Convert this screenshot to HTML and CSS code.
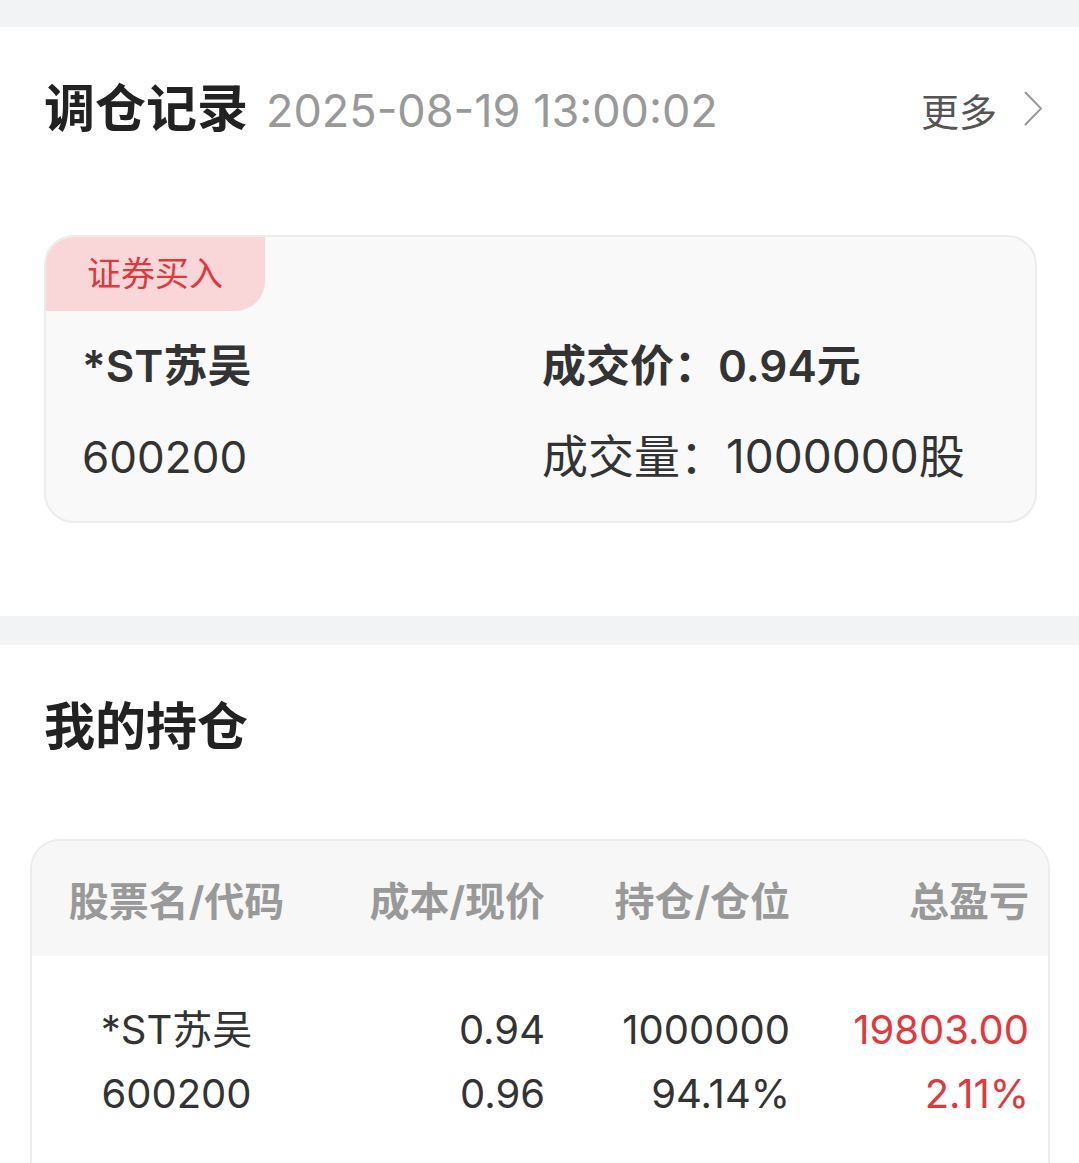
FILE: index.html
```html
<!doctype html>
<html>
  <head>
    <title>调仓记录</title>
    <meta name="viewport" content="width=device-width, initial-scale=1.0" />
    <meta charset="utf-8" />
    <link rel="stylesheet" href="styles.css">
  </head>
  <body>
    <section class="panel record">
      <div class="panel-head">
        <h2 class="title">调仓记录</h2>
        <span class="stamp">2025-08-19 13:00:02</span>
        <a class="more">
          <span>更多</span>
          <svg width="20" height="36" viewBox="0 0 20 36">
            <path d="M2 1 L18 17.5 L2 34" fill="none" stroke="#9a9a9a" stroke-width="2" />
          </svg>
        </a>
      </div>
      <div class="trade-card">
        <div class="tag">证券买入</div>
        <div class="trade-body">
          <div class="cell strong">*ST苏吴</div>
          <div class="cell strong">成交价：0.94元</div>
          <div class="cell"><span class="num">600200</span></div>
          <div class="cell">成交量：1000000股</div>
        </div>
      </div>
    </section>

    <section class="panel holdings">
      <div class="panel-head">
        <h2 class="title">我的持仓</h2>
      </div>
      <div class="table">
        <div class="thead">
          <div class="col first">股票名/代码</div>
          <div class="col">成本/现价</div>
          <div class="col">持仓/仓位</div>
          <div class="col">总盈亏</div>
        </div>
        <div class="trow">
          <div class="col first">
            <div>*ST苏吴</div>
            <div>600200</div>
          </div>
          <div class="col">
            <div>0.94</div>
            <div>0.96</div>
          </div>
          <div class="col">
            <div>1000000</div>
            <div>94.14%</div>
          </div>
          <div class="col up">
            <div>19803.00</div>
            <div>2.11%</div>
          </div>
        </div>
      </div>
    </section>
  </body>
</html>
```

FILE: styles.css
```css
* {
  box-sizing: border-box;
}

body {
  margin: 0;
  padding: 27px 0 0;
  background: #f2f3f5;
  color: #333;
  font-family: Inter, "Noto Sans CJK SC", sans-serif;
}

.panel {
  background: #fff;
}

.record {
  height: 589px;
  padding: 50px 42px 0 44px;
  margin-bottom: 29px;
}

.holdings {
  height: 600px;
  padding: 50px 29px 0 30px;
}

.panel-head {
  display: flex;
  align-items: center;
  height: 64px;
}

.record .panel-head {
  margin-right: -6px;
}

.title {
  margin: 0;
  font-size: 51px;
  font-weight: 700;
  color: #222;
  line-height: 64px;
}

.stamp {
  margin-left: 18px;
  font-size: 45px;
  color: #999;
  line-height: 64px;
  padding-top: 4px;
}

.more {
  margin-left: auto;
  display: flex;
  align-items: center;
  gap: 26px;
  font-size: 38px;
  color: #555;
}

.more svg {
  display: block;
}

.trade-card {
  margin-top: 94px;
  height: 288px;
  background: #f9f9f9;
  border: 2px solid #ececec;
  border-radius: 30px;
  overflow: hidden;
}

.tag {
  width: 219px;
  height: 74px;
  background: #f9d7d8;
  border-bottom-right-radius: 30px;
  color: #e0383c;
  font-size: 34px;
  line-height: 74px;
  padding-left: 41px;
}

.trade-body {
  display: grid;
  grid-template-columns: 460px 1fr;
  padding: 10px 0 0 36px;
}

.cell {
  font-size: 46px;
  line-height: 90px;
  color: #333;
}

.cell.strong {
  font-weight: 600;
  font-size: 44px;
}

.num {
  font-size: 44px;
}

.holdings .panel-head {
  padding-left: 14px;
}

.table {
  margin-top: 80px;
  border: 2px solid #ececec;
  border-bottom: none;
  border-radius: 30px 30px 0 0;
  overflow: hidden;
}

.thead,
.trow {
  display: grid;
  grid-template-columns: 289px 224px 245px 239px;
  padding-right: 21px;
}

.thead {
  height: 115px;
  background: #f7f7f7;
  align-items: center;
  font-size: 40px;
  font-weight: 700;
  color: #999;
}

.trow {
  padding-top: 42px;
  padding-bottom: 40px;
  font-size: 40px;
  line-height: 64px;
  color: #333;
}

.col {
  text-align: right;
}

.col.first {
  text-align: center;
}

.up {
  color: #e0383c;
}
```
